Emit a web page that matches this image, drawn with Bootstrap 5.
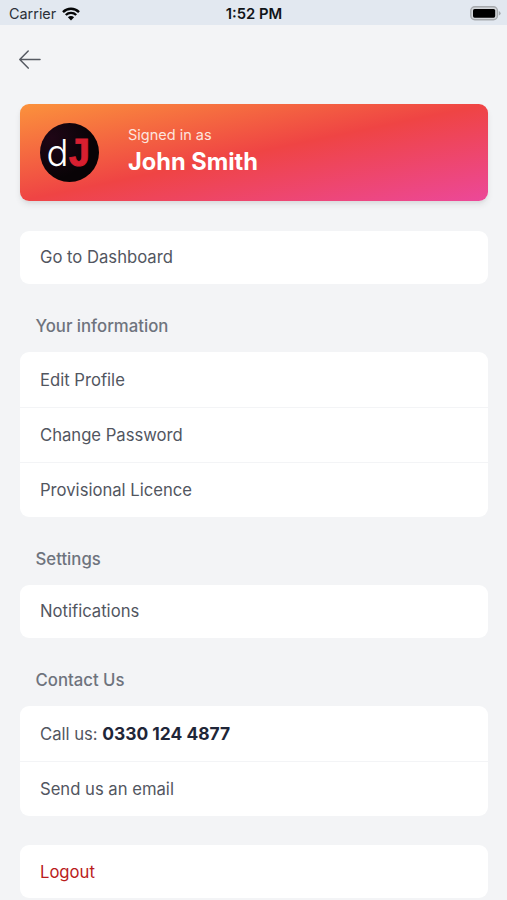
<!DOCTYPE html>
<html lang="en">
<head>
<meta charset="utf-8">
<meta name="viewport" content="width=device-width, initial-scale=1">
<title>Account</title>
<link href="https://cdn.jsdelivr.net/npm/bootstrap@5.3.0/dist/css/bootstrap.min.css" rel="stylesheet">
<style>
  body { background: #f3f4f6; color: #52565f; font-family: Inter, "Liberation Sans", sans-serif; font-size: 16.65px; line-height: 24px; height: 900px; overflow: hidden; }
  .status-bar { height: 25px; background: #e2e8f0; color: #2b3038; font-size: 14.4px; }
  .status-left { padding: 2px 0 0 9px; }
  .wifi { margin-left: 6px; }
  .status-time { color: #111418; font-size: 14.8px; padding: 2px 2px 0 0; }
  .status-right { padding: 2px 6px 0 0; }
  .back-row { height: 78.5px; padding: 24px 0 0 18px; }
  .screen-body { padding: 0 19.4px 0 20.4px; }
  .profile-card { height: 97.5px; border-radius: 9px; padding-left: 19.6px; background: linear-gradient(to bottom right, #fb923c, #ef4444, #ec4899); box-shadow: 0 4px 6px rgba(0,0,0,.07), 0 2px 3px rgba(0,0,0,.04); }
  .profile-text { margin-left: 29px; padding-top: 1px; }
  .signed { font-size: 14.5px; line-height: 19px; color: #fde4de; }
  .person { font-size: 23.6px; line-height: 36px; color: #fff; }
  .menu { --bs-list-group-border-radius: 9px; --bs-list-group-border-width: 0; --bs-list-group-color: #52565f; --bs-list-group-bg: #fff; }
  .menu .list-group-item { height: 55px; padding: 1px 19.6px 0; display: flex; align-items: center; }
  .menu .list-group-item:first-child { height: 54.5px; }
  .menu .list-group-item:only-child { height: 53.5px; padding-top: 0; }
  .menu .list-group-item + .list-group-item { border-top: 1.5px solid #f3f4f6; padding-top: 0; }
  .menu-title { font-size: 16.75px; line-height: 24px; font-weight: 500; color: #6e737d; margin: 30px 0 14.1px 15.1px; }
  .menu-gap { margin-top: 29.5px; }
  .menu-title ~ .menu-gap { margin-top: 29.2px; }
  .phone { color: #1f2638; font-size: 17.4px; }
  .menu .logout { color: #b91c1c; }
</style>
<script src="https://cdn.jsdelivr.net/npm/bootstrap@5.3.0/dist/js/bootstrap.bundle.min.js"></script>
</head>
<body>
<header class="status-bar d-flex align-items-center justify-content-between">
  <div class="status-left d-flex align-items-center col">
    <span>Carrier</span>
    <svg class="wifi" width="18" height="14" viewBox="0 0 18 14" fill="none" stroke="#050607" stroke-width="2.4"><path d="M1 5.1a11.3 11.3 0 0 1 16 0M3.8 8a7.4 7.4 0 0 1 10.4 0"/><path d="M9 13.5 5.9 10.3a4.4 4.4 0 0 1 6.2 0z" fill="#050607" stroke="none"/></svg>
  </div>
  <div class="status-time fw-semibold">1:52 PM</div>
  <div class="status-right col d-flex justify-content-end">
    <svg width="31" height="15" viewBox="0 0 31 15"><rect x=".8" y=".8" width="26.6" height="13" rx="4" fill="#d3d6da" stroke="#a6a9ad" stroke-width="1.4"/><rect x="3" y="3" width="22.2" height="8.7" rx="1.6" fill="#000"/><path d="M28.8 5v4.6q1.8-.7 1.8-2.3T28.8 5z" fill="#a6a9ad"/></svg>
  </div>
</header>
<nav class="back-row">
  <svg width="24" height="22" viewBox="0 0 24 22" fill="none" stroke="#565a62" stroke-width="1.5" stroke-linecap="round" stroke-linejoin="round" class="d-block"><path d="M22 10.5H2M10.2 2 1.8 10.5l8.4 8.6"/></svg>
</nav>
<main class="screen-body">
  <section class="profile-card d-flex align-items-center">
    <svg width="59" height="59" viewBox="0 0 59 59">
      <defs><radialGradient id="disc" cx=".2" cy=".25" r=".7"><stop offset="0" stop-color="#1f0616"/><stop offset="1" stop-color="#080306"/></radialGradient></defs>
      <circle cx="29.5" cy="29.5" r="29.5" fill="url(#disc)"/>
      <text y="43" font-size="36.5" fill="#fff"><tspan x="6.6" font-family="Inter, sans-serif" font-weight="300">d</tspan><tspan dx="-1" font-family="Liberation Mono, monospace" font-size="40" font-weight="700" fill="#d81f30" stroke="#d81f30" stroke-width=".9">J</tspan></text>
    </svg>
    <div class="profile-text">
      <div class="signed">Signed in as</div>
      <div class="person fw-bold">John Smith</div>
    </div>
  </section>
  <div class="menu menu-gap list-group"><a class="list-group-item">Go to Dashboard</a></div>
  <h2 class="menu-title">Your information</h2>
  <div class="menu list-group">
    <a class="list-group-item">Edit Profile</a>
    <a class="list-group-item">Change Password</a>
    <a class="list-group-item">Provisional Licence</a>
  </div>
  <h2 class="menu-title">Settings</h2>
  <div class="menu list-group"><a class="list-group-item">Notifications</a></div>
  <h2 class="menu-title">Contact Us</h2>
  <div class="menu list-group">
    <a class="list-group-item">Call us:&nbsp;<span class="phone fw-bold">0330 124 4877</span></a>
    <a class="list-group-item">Send us an email</a>
  </div>
  <div class="menu menu-gap list-group"><a class="list-group-item logout">Logout</a></div>
</main>
</body>
</html>
